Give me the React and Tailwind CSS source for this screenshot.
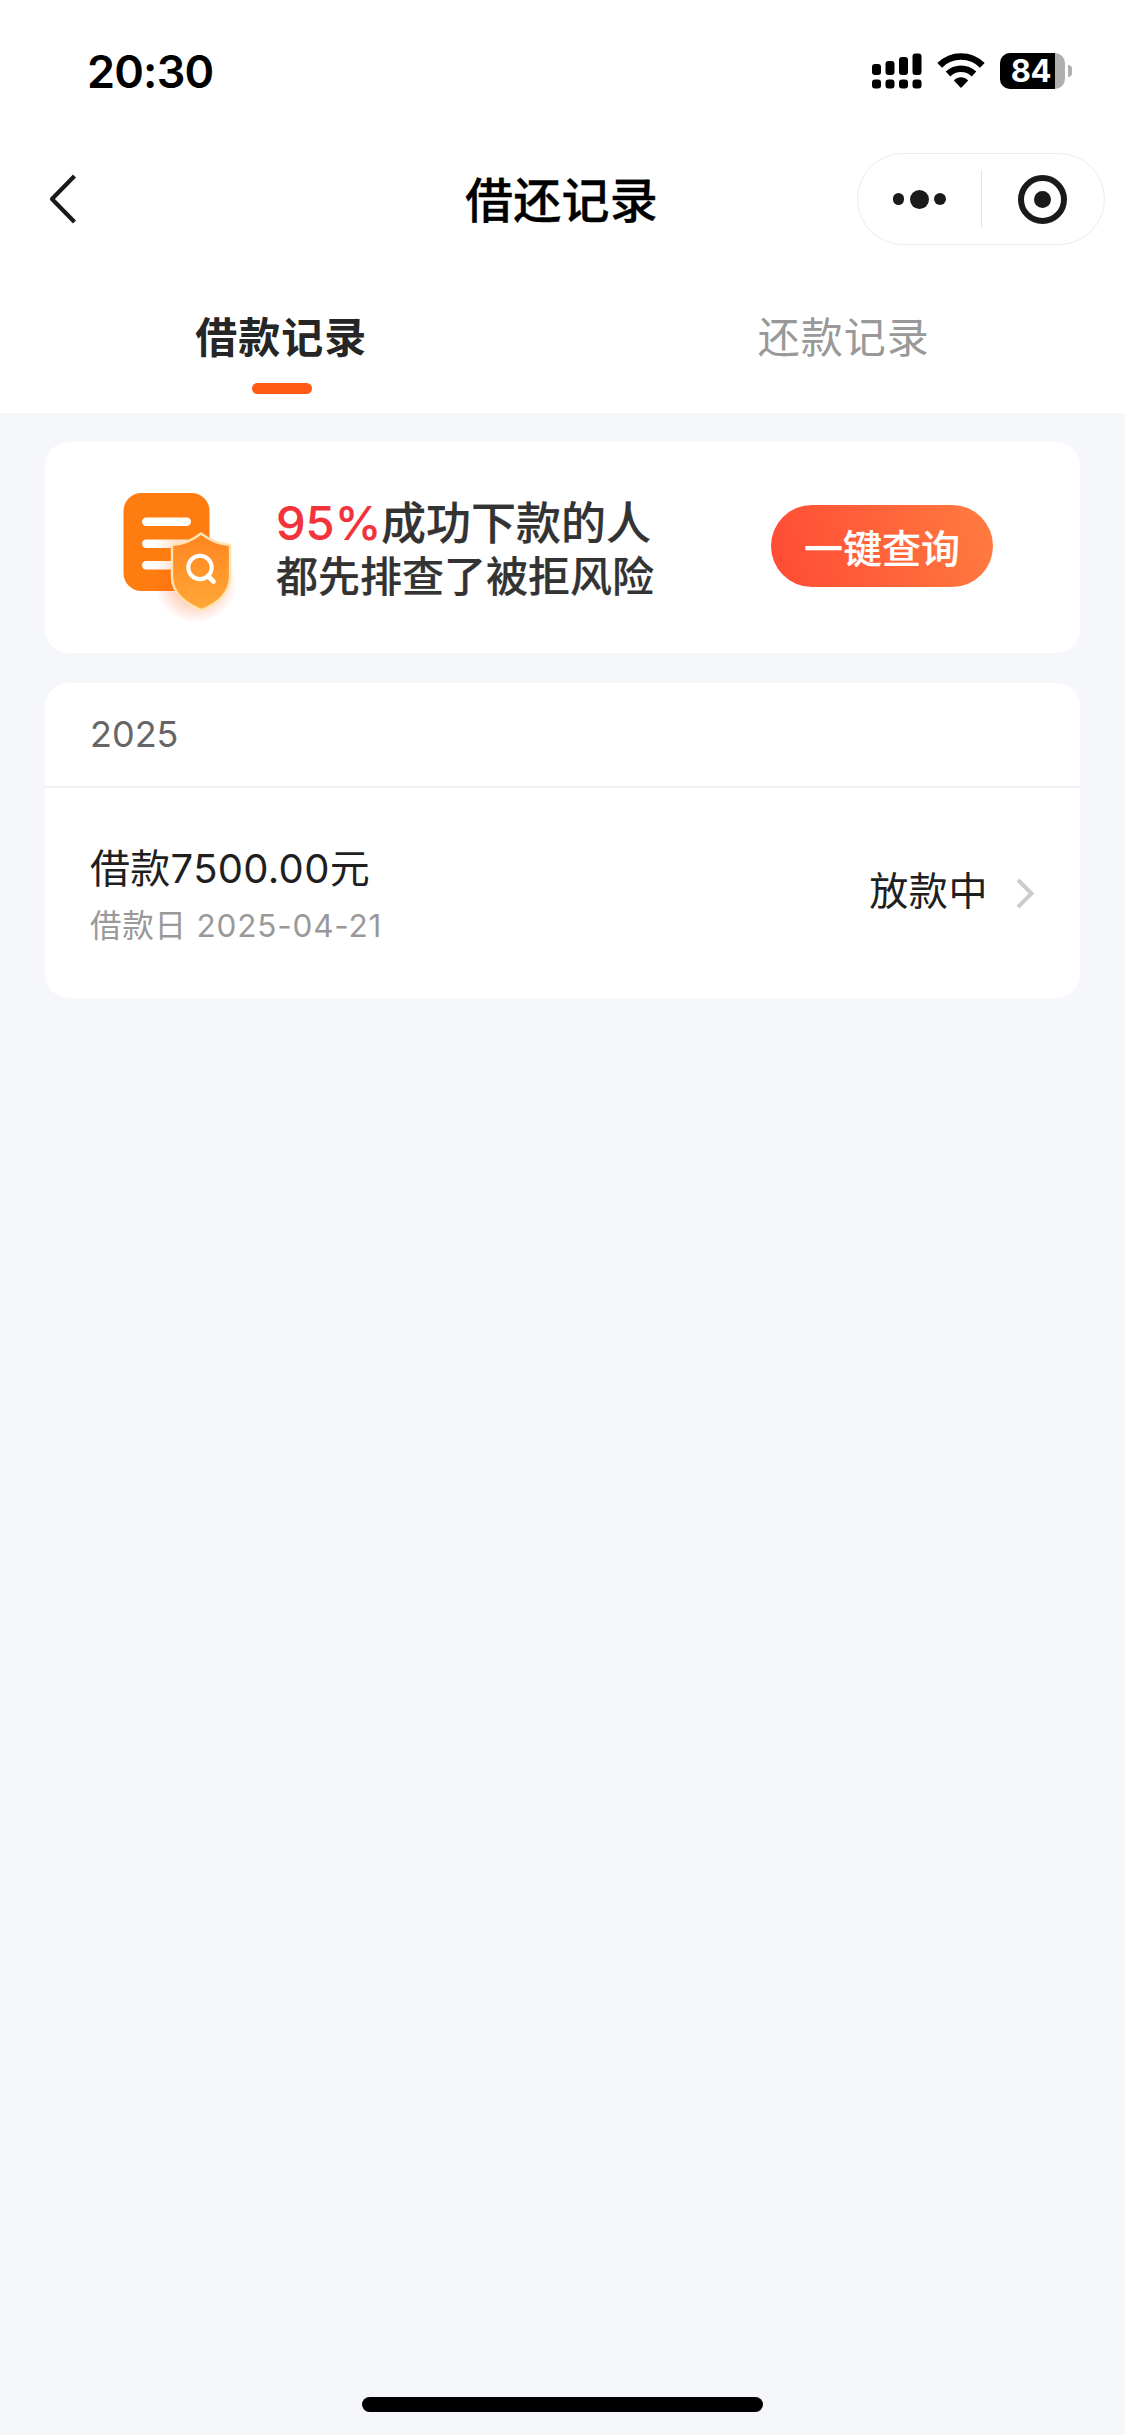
import { useState } from 'react'

const TABS = [
  { id: 'borrow', label: '借款记录' },
  { id: 'repay', label: '还款记录' },
]

const RECORDS = [
  {
    year: '2025',
    list: [{ id: 1, title: '借款7500.00元', date: '借款日 2025-04-21', status: '放款中' }],
  },
]

function StatusBar() {
  return (
    <div className="flex h-[142px] items-center justify-between pl-[87px] pr-[53px]">
      <span className="pt-[2px] text-[45px] leading-[60px] font-semibold text-black tracking-[-0.8px]">20:30</span>
      <div className="flex items-center">
        <svg width="50" height="36" viewBox="0 0 50 36" className="mr-[15px]">
          <rect x="0" y="11" width="9" height="11" rx="3" />
          <rect x="13.5" y="8" width="9" height="14" rx="3" />
          <rect x="27" y="4" width="9" height="18" rx="3" />
          <rect x="40.5" y="0.5" width="9" height="21.5" rx="3" />
          <rect x="0" y="26.5" width="9" height="9" rx="3" />
          <rect x="13.5" y="26.5" width="9" height="9" rx="3" />
          <rect x="27" y="26.5" width="9" height="9" rx="3" />
          <rect x="40.5" y="26.5" width="9" height="9" rx="3" />
        </svg>
        <svg width="48" height="36" viewBox="0 0 48 36" className="mr-[15px]">
          <path d="M2.7 12.4 C14.5 0.6 33.5 0.6 45.3 12.4" fill="none" stroke="#000" strokeWidth="6.6" />
          <path d="M11 21 C18.3 14 29.7 14 37 21" fill="none" stroke="#000" strokeWidth="6.6" />
          <path d="M16.8 27.6 C21 23.2 27 23.2 31.2 27.6 L24 35 Z" />
        </svg>
        <div className="flex h-9 w-[65px] rounded-[10px] bg-[#b0b0b0]">
          <div className="flex w-[55px] items-center justify-center rounded-l-[10px] bg-black pl-[7px]">
            <span className="text-[31px] leading-9 font-bold text-white tracking-[-0.3px]">84</span>
          </div>
        </div>
        <div className="ml-[3px] h-3 w-1 rounded-r-full bg-[#b0b0b0]" />
      </div>
    </div>
  )
}

function NavBar() {
  return (
    <div className="grid h-[114px] grid-cols-3 items-center pl-[46px] pr-5">
      <svg width="34" height="54" viewBox="0 0 34 54" fill="none" stroke="#1a1a1a" strokeWidth="4.2">
        <path d="M28.5 4 L6 27 L28.5 50" strokeLinejoin="round" />
      </svg>
      <h1 className="-ml-[28px] pt-[3px] text-center text-[48px] leading-[64px] font-medium text-black tracking-[0.2px] [-webkit-text-stroke:0.3px]">
        借还记录
      </h1>
      <div className="flex h-[92px] w-[248px] items-center justify-self-end rounded-full border border-[#ececec]">
        <div className="flex h-full flex-1 items-center justify-center gap-[5.5px]">
          <i className="size-[11.5px] rounded-full bg-[#1a1a1a]" />
          <i className="size-[19px] rounded-full bg-[#1a1a1a]" />
          <i className="size-[11.5px] rounded-full bg-[#1a1a1a]" />
        </div>
        <div className="h-[58px] w-px bg-[#e5e5e5]" />
        <div className="flex h-full flex-1 items-center justify-center">
          <div className="flex size-[49px] items-center justify-center rounded-full border-[6px] border-[#1a1a1a]">
            <i className="size-[17px] rounded-full bg-[#1a1a1a]" />
          </div>
        </div>
      </div>
    </div>
  )
}

function Tabs({ active, onChange }) {
  return (
    <div className="grid h-[157px] grid-cols-2">
      {TABS.map((t) => (
        <button key={t.id} onClick={() => onChange(t.id)} className="flex flex-col items-center pt-[52px]">
          <span
            className={`text-[42px] leading-[60px] tracking-[1px] ${active === t.id ? 'font-bold text-[#262626]' : 'text-[#999]'}`}
          >
            {t.label}
          </span>
          {active === t.id && <span className="mt-[15px] ml-px h-[11px] w-[60px] rounded-full bg-[#ff5a14]" />}
        </button>
      ))}
    </div>
  )
}

function RiskIcon() {
  return (
    <svg width="130" height="140" viewBox="0 0 130 140" fill="none" className="mt-[15px]">
      <defs>
        <linearGradient id="shield" x1="86" y1="48" x2="86" y2="125" gradientUnits="userSpaceOnUse">
          <stop stopColor="#ff8420" />
          <stop offset="1" stopColor="#ffa837" />
        </linearGradient>
        <radialGradient id="glow">
          <stop offset="0.3" stopColor="#ff5a20" stopOpacity="0.4" />
          <stop offset="1" stopColor="#ff5a20" stopOpacity="0" />
        </radialGradient>
        <linearGradient id="line" x1="40" y1="0" x2="60" y2="0" gradientUnits="userSpaceOnUse">
          <stop stopColor="#fff" />
          <stop offset="1" stopColor="#ffe3d0" />
        </linearGradient>
      </defs>
      <rect x="8.5" y="8" width="86" height="98" rx="18" fill="#ff7c10" />
      <rect x="27" y="32.5" width="49" height="8.5" rx="4.2" fill="#fff" />
      <ellipse cx="81" cy="99" rx="41" ry="39" fill="url(#glow)" />
      <rect x="27" y="54.5" width="49" height="8.5" rx="4.2" fill="url(#line)" />
      <rect x="27" y="76" width="49" height="8.5" rx="4.2" fill="url(#line)" />
      <path
        d="M86 48.5 C94 55 104 59 115 60 V92 C115 108 102 119 86.5 125 C71 119 57 108 57 92 V60 C68 59 78 55 86 48.5 Z"
        fill="url(#shield)"
        stroke="#ffe3b0"
        strokeWidth="2.4"
        strokeLinejoin="round"
      />
      <circle cx="85" cy="82.5" r="11.7" stroke="#fff" strokeWidth="4" />
      <path d="M93 91 L98.5 96.5" stroke="#fff" strokeWidth="4.6" strokeLinecap="round" />
    </svg>
  )
}

function Banner() {
  return (
    <div className="flex h-[211px] items-center rounded-3xl bg-white pl-[70px] pr-[87px]">
      <RiskIcon />
      <div className="ml-[31px] pt-[4px] whitespace-nowrap font-medium text-[#333] [-webkit-text-stroke:0.2px]">
        <p className="flex text-[45px] leading-[54px]">
          <span className="w-[105px] text-[47px] leading-[52px] text-[#f2333c]">95%</span>
          <span>成功下款的人</span>
        </p>
        <p className="text-[42px] leading-[52px]">都先排查了被拒风险</p>
      </div>
      <button className="mb-[3px] ml-auto h-[82px] w-[222px] rounded-full bg-linear-[75deg] from-[#ff4a35] to-[#ff7c40] pt-[5px] text-[39px] leading-[77px] font-medium text-white [-webkit-text-stroke:0.2px]">
        一键查询
      </button>
    </div>
  )
}

function RecordItem({ item }) {
  return (
    <div className="flex h-[210px] items-center justify-between pl-[45px] pr-[44px]">
      <div className="pt-[6px]">
        <p className="text-[40px] leading-[56px] text-[#1f1f1f] tracking-[0.3px]">{item.title}</p>
        <p className="mt-[3px] text-[31.5px] leading-[52px] text-[#999] tracking-[0.8px]">{item.date}</p>
      </div>
      <div className="flex items-center">
        <span className="pb-[5px] text-[39px] leading-[56px] text-[#1f1f1f] tracking-[0.6px]">{item.status}</span>
        <svg width="22" height="34" viewBox="0 0 22 34" fill="none" className="ml-[26px]">
          <path d="M4 4 L17.5 17.5 L4 31" stroke="#ccc" strokeWidth="4" />
        </svg>
      </div>
    </div>
  )
}

export default function App() {
  const [active, setActive] = useState('borrow')

  return (
    <div className="flex h-[2435px] w-[1125px] flex-col bg-[#f5f7fb] font-[Inter,'Noto_Sans_CJK_SC',sans-serif]">
      <header className="bg-white">
        <StatusBar />
        <NavBar />
        <Tabs active={active} onChange={setActive} />
      </header>

      <main className="flex flex-1 flex-col gap-[30px] px-[45px] pt-[29px]">
        <Banner />
        {RECORDS.map((g) => (
          <section key={g.year} className="rounded-3xl bg-white">
            <h2 className="h-[105px] border-b-2 border-[#f0f0f0] pl-[45px] text-[36px] leading-[103px] text-[#666]">{g.year}</h2>
            {g.list.map((item) => (
              <RecordItem key={item.id} item={item} />
            ))}
          </section>
        ))}
      </main>

      <div className="mx-auto mb-[23px] h-[15px] w-[401px] rounded-full bg-black" />
    </div>
  )
}
